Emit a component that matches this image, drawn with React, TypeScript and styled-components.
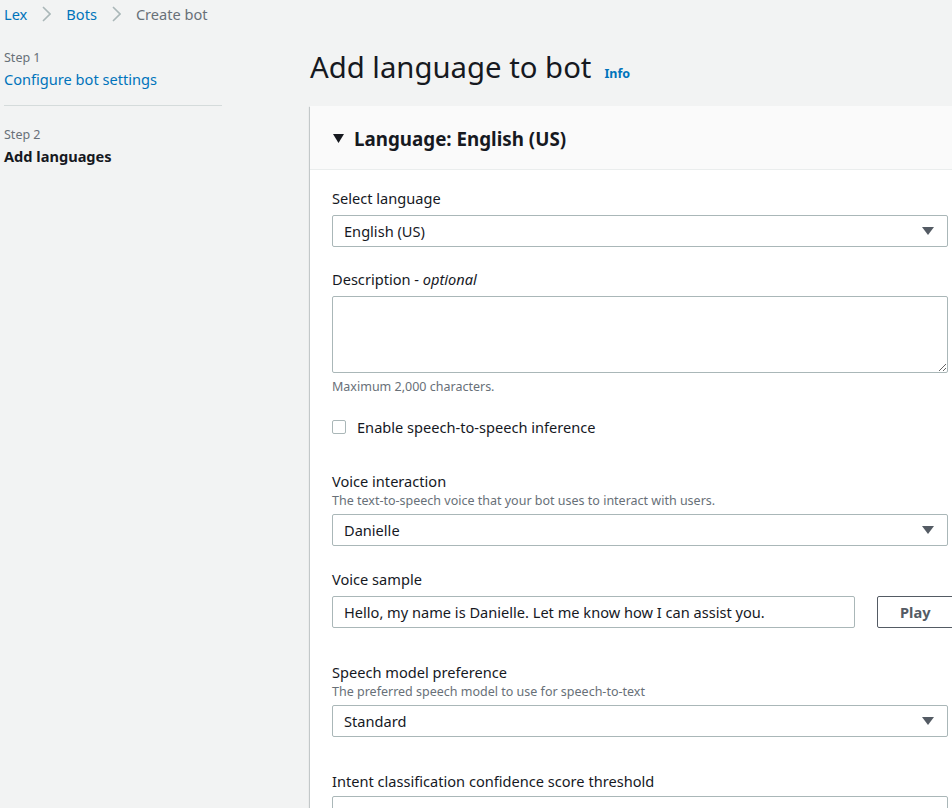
import styled, { createGlobalStyle } from "styled-components";

const GlobalStyle = createGlobalStyle`
  html, body {
    margin: 0;
    padding: 0;
    background: #f2f3f3;
    overflow: hidden;
  }
  body {
    font-family: "Noto Sans", "Open Sans", Arial, sans-serif;
    color: #16191f;
    font-size: 14.6px;
    line-height: 22px;
  }
  * {
    box-sizing: border-box;
  }
`;

const Page = styled.div`
  width: 1000px;
  height: 808px;
  padding: 3px 0 0 4px;
`;

const Crumbs = styled.nav`
  display: flex;
  align-items: center;
  gap: 15px;
  height: 22px;
`;

const Crumb = styled.span<{ $current?: boolean }>`
  color: ${(p) => (p.$current ? "#687078" : "#0073bb")};
  font-size: 14.6px;
`;

const Layout = styled.div`
  display: flex;
  margin-top: 24px;
`;

const Sidebar = styled.aside`
  width: 218px;
  flex: none;
`;

const Step = styled.div`
  padding-bottom: 15px;
  & + & {
    border-top: 1px solid #d5dbdb;
    padding-top: 20px;
  }
`;

const StepNumber = styled.div`
  font-size: 12.5px;
  line-height: 18px;
  color: #687078;
`;

const StepName = styled.div<{ $active?: boolean }>`
  margin-top: 1px;
  font-size: 14.6px;
  line-height: 22px;
  color: ${(p) => (p.$active ? "#16191f" : "#0073bb")};
  font-weight: ${(p) => (p.$active ? 700 : 400)};
`;

const Main = styled.main`
  margin-left: 88px;
  width: 660px;
  flex: none;
`;

const Heading = styled.h1`
  margin: 0;
  font-size: 29.3px;
  line-height: 36px;
  font-weight: 400;
  display: flex;
  align-items: baseline;
  gap: 13px;
`;

const Info = styled.span`
  font-size: 12.5px;
  font-weight: 700;
  color: #0073bb;
`;

const Panel = styled.section`
  margin-top: 14px;
  background: #fff;
  box-shadow: 0 1px 1px 0 rgba(0, 28, 36, 0.3),
    1px 1px 1px 0 rgba(0, 28, 36, 0.15), -1px 1px 1px 0 rgba(0, 28, 36, 0.15);
`;

const PanelHeader = styled.header`
  height: 64px;
  background: #fafafa;
  border-bottom: 1px solid #eaeded;
  display: flex;
  align-items: center;
  gap: 10px;
  padding: 2px 23px 0;
`;

const PanelTitle = styled.h2`
  margin: 0;
  font-size: 18.8px;
  line-height: 26px;
  font-weight: 700;
`;

const PanelBody = styled.div`
  padding: 17px 22px 20px;
`;

const Field = styled.div<{ $gap?: number }>`
  margin-top: ${(p) => p.$gap ?? 0}px;
`;

const Label = styled.div`
  font-size: 14.6px;
  line-height: 22px;
  color: #16191f;
  em {
    font-style: italic;
  }
`;

const Description = styled.div`
  font-size: 12.5px;
  line-height: 16px;
  color: #687078;
  margin-top: 1px;
`;

const Control = styled.div<{ $gap?: number }>`
  margin-top: ${(p) => p.$gap ?? 6}px;
`;

const SelectBox = styled.div`
  height: 32px;
  border: 1px solid #aab7b8;
  border-radius: 2px;
  display: flex;
  align-items: center;
  justify-content: space-between;
  padding: 0 13px 0 11px;
  font-size: 14.6px;
  background: #fff;
`;

const TextArea = styled.textarea`
  display: block;
  width: 100%;
  height: 77px;
  border: 1px solid #aab7b8;
  border-radius: 2px;
  font-family: inherit;
  font-size: 14.6px;
  resize: vertical;
`;

const Constraint = styled.div`
  font-size: 12.5px;
  line-height: 16px;
  color: #687078;
  margin-top: 6px;
`;

const CheckRow = styled.label`
  display: flex;
  align-items: center;
  gap: 11px;
  margin-top: 21px;
  font-size: 14.6px;
`;

const CheckBox = styled.span`
  width: 14px;
  height: 14px;
  border: 1px solid #aab7b8;
  border-radius: 2px;
  background: #fff;
`;

const SampleRow = styled.div`
  display: flex;
  gap: 22px;
  margin-top: 6px;
`;

const TextInput = styled.div`
  flex: 0 0 523px;
  height: 32px;
  border: 1px solid #aab7b8;
  border-radius: 2px;
  display: flex;
  align-items: center;
  padding: 0 11px;
  font-size: 14.6px;
`;

const Button = styled.button`
  flex: 0 0 80px;
  height: 32px;
  border: 1px solid #545b64;
  border-radius: 2px;
  background: #fff;
  color: #545b64;
  font-family: inherit;
  font-size: 14.6px;
  font-weight: 700;
  padding: 0 18px 0 22px;
  text-align: left;
`;

const EmptyInput = styled.div`
  height: 32px;
  border: 1px solid #aab7b8;
  border-radius: 2px;
  margin-top: 4px;
`;

const Caret = () => (
  <svg width="12" height="9" viewBox="0 0 12 9">
    <path d="M0 0h12L6 8z" fill="#545b64" />
  </svg>
);

const Chevron = () => (
  <svg width="9" height="16" viewBox="0 0 9 16">
    <path d="M1 1l7 7-7 7" fill="none" stroke="#aab7b8" strokeWidth="1.6" />
  </svg>
);

const Select = ({ value, gap }: { value: string; gap?: number }) => (
  <Control $gap={gap}>
    <SelectBox>
      <span>{value}</span>
      <Caret />
    </SelectBox>
  </Control>
);

const App = () => {
  return (
    <>
      <GlobalStyle />
      <Page>
        <Crumbs>
          <Crumb>Lex</Crumb>
          <Chevron />
          <Crumb>Bots</Crumb>
          <Chevron />
          <Crumb $current>Create bot</Crumb>
        </Crumbs>
        <Layout>
          <Sidebar>
            <Step>
              <StepNumber>Step 1</StepNumber>
              <StepName>Configure bot settings</StepName>
            </Step>
            <Step>
              <StepNumber>Step 2</StepNumber>
              <StepName $active>Add languages</StepName>
            </Step>
          </Sidebar>
          <Main>
            <Heading>
              Add language to bot <Info>Info</Info>
            </Heading>
            <Panel>
              <PanelHeader>
                <svg width="11" height="10" viewBox="0 0 11 10">
                  <path d="M0 0h11L5.5 9z" fill="#16191f" />
                </svg>
                <PanelTitle>Language: English (US)</PanelTitle>
              </PanelHeader>
              <PanelBody>
                <Field>
                  <Label>Select language</Label>
                  <Select value="English (US)" />
                </Field>
                <Field $gap={21}>
                  <Label>
                    Description - <em>optional</em>
                  </Label>
                  <Control>
                    <TextArea />
                  </Control>
                  <Constraint>Maximum 2,000 characters.</Constraint>
                </Field>
                <CheckRow>
                  <CheckBox />
                  Enable speech-to-speech inference
                </CheckRow>
                <Field $gap={32}>
                  <Label>Voice interaction</Label>
                  <Description>
                    The text-to-speech voice that your bot uses to interact
                    with users.
                  </Description>
                  <Select value="Danielle" gap={5} />
                </Field>
                <Field $gap={22}>
                  <Label>Voice sample</Label>
                  <SampleRow>
                    <TextInput>
                      Hello, my name is Danielle. Let me know how I can assist
                      you.
                    </TextInput>
                    <Button>Play</Button>
                  </SampleRow>
                </Field>
                <Field $gap={33}>
                  <Label>Speech model preference</Label>
                  <Description>
                    The preferred speech model to use for speech-to-text
                  </Description>
                  <Select value="Standard" gap={5} />
                </Field>
                <Field $gap={33}>
                  <Label>Intent classification confidence score threshold</Label>
                  <EmptyInput />
                </Field>
              </PanelBody>
            </Panel>
          </Main>
        </Layout>
      </Page>
    </>
  );
};

export default App;
